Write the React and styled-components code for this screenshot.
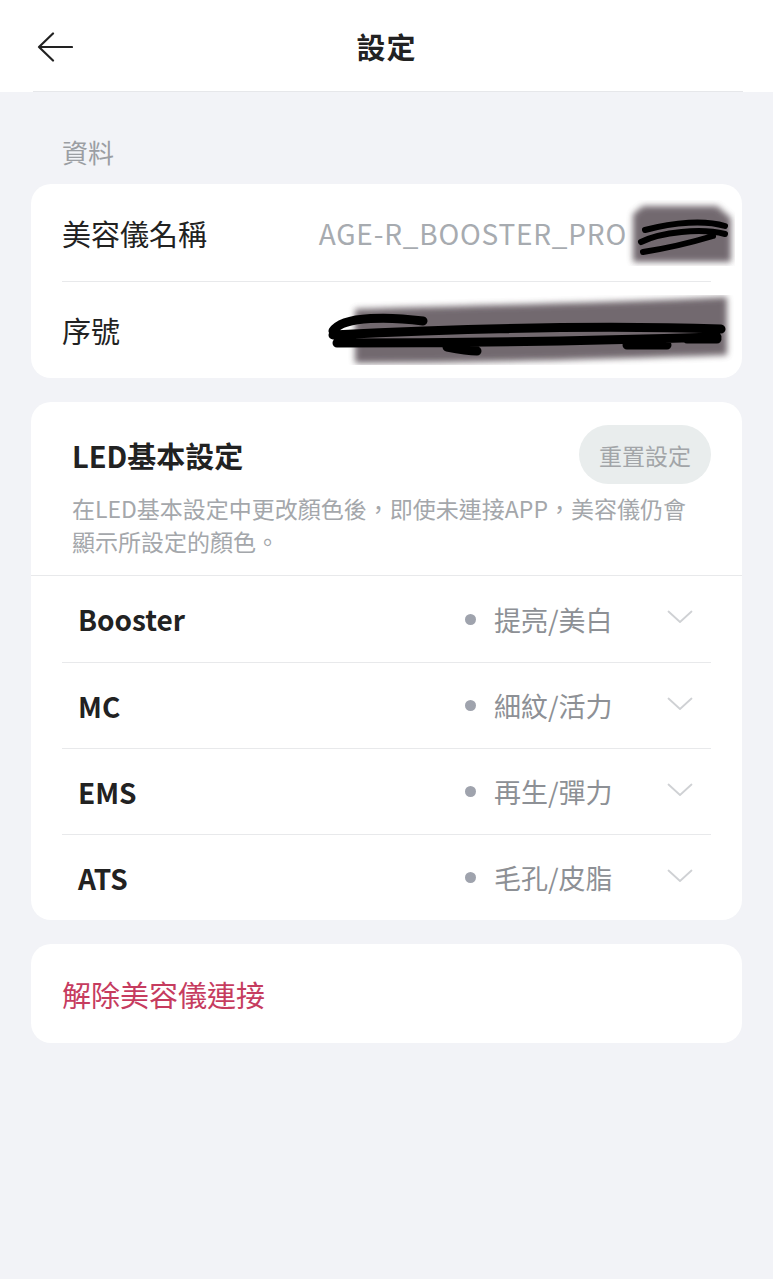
import React from 'react';
import styled, { createGlobalStyle } from 'styled-components';

const GlobalStyle = createGlobalStyle`
  html, body {
    margin: 0;
    padding: 0;
    background: #f2f3f7;
  }
  body {
    font-family: "Noto Sans CJK TC", "Noto Sans", sans-serif;
    color: #222;
  }
  *, *::before, *::after {
    box-sizing: border-box;
  }
`;

const ledRows = [
  { name: 'Booster', value: '提亮/美白' },
  { name: 'MC', value: '細紋/活力' },
  { name: 'EMS', value: '再生/彈力' },
  { name: 'ATS', value: '毛孔/皮脂' },
];

function BackArrow() {
  return (
    <svg width="36" height="30" viewBox="0 0 36 30" fill="none">
      <path d="M35 15H2M16 1.5L2 15l14 13.5" stroke="#222" strokeWidth="2.2" strokeLinecap="round" strokeLinejoin="round" />
    </svg>
  );
}

function Chevron() {
  return (
    <svg width="26" height="16" viewBox="0 0 26 16" fill="none">
      <path d="M1.5 2.5L13 13L24.5 2.5" stroke="#cfd1d4" strokeWidth="1.8" strokeLinecap="round" strokeLinejoin="round" />
    </svg>
  );
}

function Scribble({ w, h, children }) {
  return (
    <Redact width={w} height={h} viewBox={`0 0 ${w} ${h}`}>
      <defs>
        <filter id={`blur${w}`} x="-20%" y="-20%" width="140%" height="140%">
          <feGaussianBlur stdDeviation="3" />
        </filter>
      </defs>
      {children(`url(#blur${w})`)}
    </Redact>
  );
}

function App() {
  return (
    <>
      <GlobalStyle />
      <Page>
        <Header>
          <BackButton><BackArrow /></BackButton>
          <Title>設定</Title>
        </Header>

        <SectionLabel>資料</SectionLabel>
        <Card>
          <InfoRow>
            <InfoLabel>美容儀名稱</InfoLabel>
            <InfoValue>
              AGE-R_BOOSTER_PRO
              <Scribble w={110} h={66}>
                {(f) => (
                  <>
                    <path d="M18 6h74l14 12v44H8V14z" fill="#5a4f57" opacity="0.85" filter={f} />
                    <path d="M20 30c30-8 60-10 80-4M16 42c20-10 60-14 84-8M18 52c26-4 50-10 70-16" stroke="#000" strokeWidth="6" strokeLinecap="round" fill="none" />
                  </>
                )}
              </Scribble>
            </InfoValue>
          </InfoRow>
          <InfoRow>
            <InfoLabel>序號</InfoLabel>
            <InfoValue>
              <Scribble w={408} h={70}>
                {(f) => (
                  <>
                    <path d="M28 14c120-4 260-6 372-12v58c-120 4-250 8-372 8z" fill="#5a4f57" opacity="0.85" filter={f} />
                    <path d="M6 36c10-16 60-14 90-10M6 40c120-6 260-10 388-6M10 48c120 0 250-2 380-6M120 52c10 2 20 4 30 4M300 50h40M360 44h30" stroke="#000" strokeWidth="9" strokeLinecap="round" fill="none" />
                  </>
                )}
              </Scribble>
            </InfoValue>
          </InfoRow>
        </Card>

        <Card $gap>
          <LedHead>
            <LedTitleRow>
              <LedTitle>LED基本設定</LedTitle>
              <ResetButton>重置設定</ResetButton>
            </LedTitleRow>
            <LedDesc>在LED基本設定中更改顏色後，即使未連接APP，美容儀仍會顯示所設定的顏色。</LedDesc>
          </LedHead>
          <LedList>
            {ledRows.map((r) => (
              <LedRow key={r.name}>
                <LedName>{r.name}</LedName>
                <LedValue>
                  <Dot />
                  <span>{r.value}</span>
                </LedValue>
                <ChevronWrap><Chevron /></ChevronWrap>
              </LedRow>
            ))}
          </LedList>
        </Card>

        <Card $gap>
          <DangerRow>解除美容儀連接</DangerRow>
        </Card>
      </Page>
    </>
  );
}

export default App;

const Page = styled.div`
  min-height: 1279px;
  background: #f2f3f7;
  padding-bottom: 40px;
`;

const Header = styled.header`
  position: relative;
  height: 92px;
  background: #fff;
  display: flex;
  align-items: center;
  justify-content: center;

  &::after {
    content: '';
    position: absolute;
    left: 33px;
    right: 30px;
    bottom: 0;
    height: 1px;
    background: #e6e7ea;
  }
`;

const BackButton = styled.div`
  position: absolute;
  left: 37px;
  top: 32px;
  display: flex;
`;

const Title = styled.h1`
  margin: 0;
  font-size: 29px;
  font-weight: 700;
  color: #222;
  letter-spacing: 1px;
`;

const SectionLabel = styled.div`
  margin: 42px 0 0 62px;
  font-size: 26px;
  line-height: 36px;
  color: #9b9ea3;
  height: 50px;
`;

const Card = styled.section`
  margin: ${(p) => (p.$gap ? '24px' : '0')} 31px 0;
  background: #fff;
  border-radius: 20px;
  overflow: hidden;
`;

const InfoRow = styled.div`
  height: 97px;
  margin: 0 31px;
  display: flex;
  align-items: center;
  justify-content: space-between;

  & + & {
    border-top: 1px solid #e8e9eb;
  }
`;

const InfoLabel = styled.div`
  font-size: 29px;
  color: #222;
`;

const InfoValue = styled.div`
  position: relative;
  font-size: 28px;
  letter-spacing: 0.8px;
  color: #a7abb0;
  margin-right: -24px;
  padding-right: 108px;
  display: flex;
  align-items: center;
  white-space: nowrap;
  min-height: 66px;
`;

const Redact = styled.svg`
  position: absolute;
  right: 0;
  top: 50%;
  transform: translateY(-50%);
`;

const LedHead = styled.div`
  padding: 23px 40px 17px 41px;
  border-bottom: 1px solid #e8e9eb;
`;

const LedTitleRow = styled.div`
  display: flex;
  align-items: center;
  justify-content: space-between;
  margin-right: -9px;
`;

const LedTitle = styled.h2`
  margin: 0;
  font-size: 29px;
  font-weight: 700;
  color: #222;
`;

const ResetButton = styled.button`
  height: 59px;
  padding: 0 20px;
  border: none;
  border-radius: 30px;
  background: #e9eded;
  color: #a2a5a8;
  font-family: inherit;
  font-size: 23px;
`;

const LedDesc = styled.p`
  margin: 8px 0 0;
  font-size: 23px;
  line-height: 33px;
  color: #a4a7ab;
`;

const LedList = styled.div`
  padding: 0 31px;
`;

const LedRow = styled.div`
  height: 86px;
  display: flex;
  align-items: center;
  padding-left: 16px;

  & + & {
    border-top: 1px solid #e8e9eb;
  }
`;

const LedName = styled.div`
  flex: 1;
  font-size: 28px;
  font-weight: 700;
  color: #222;
`;

const LedValue = styled.div`
  display: flex;
  align-items: center;
  gap: 18px;
  font-size: 27px;
  color: #8d9095;
  width: 202px;
`;

const Dot = styled.span`
  width: 11px;
  height: 11px;
  border-radius: 50%;
  background: #9fa3ad;
`;

const ChevronWrap = styled.div`
  width: 44px;
  display: flex;
  justify-content: flex-start;
  margin-top: -4px;
`;

const DangerRow = styled.div`
  height: 99px;
  padding: 0 31px;
  display: flex;
  align-items: center;
  font-size: 29px;
  color: #c63c5f;
`;
